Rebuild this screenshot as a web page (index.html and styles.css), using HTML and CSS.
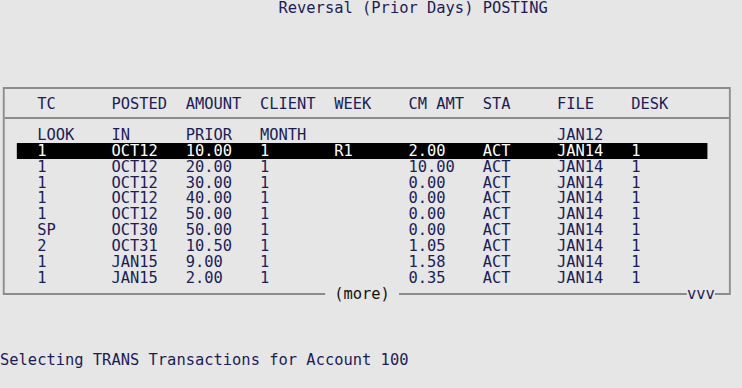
FILE: index.html
```html
<!DOCTYPE html>
<html>
<head>
    <link rel="stylesheet" href="styles.css">
</head>
<body>
    <div class="viewport">
        <div class="screen">
            <div class="title">Reversal (Prior Days) POSTING</div>

            <div class="box">
                <div class="row head">
                    <span>TC</span><span>POSTED</span><span>AMOUNT</span><span>CLIENT</span><span>WEEK</span><span>CM AMT</span><span>STA</span><span>FILE</span><span>DESK</span>
                </div>
                <div class="rows">
                    <div class="row">
                        <span>LOOK</span><span>IN</span><span>PRIOR</span><span>MONTH</span><span></span><span></span><span></span><span>JAN12</span><span></span>
                    </div>
                    <div class="row selected">
                        <span>1</span><span>OCT12</span><span>10.00</span><span>1</span><span>R1</span><span>2.00</span><span>ACT</span><span>JAN14</span><span>1</span>
                    </div>
                    <div class="row">
                        <span>1</span><span>OCT12</span><span>20.00</span><span>1</span><span></span><span>10.00</span><span>ACT</span><span>JAN14</span><span>1</span>
                    </div>
                    <div class="row">
                        <span>1</span><span>OCT12</span><span>30.00</span><span>1</span><span></span><span>0.00</span><span>ACT</span><span>JAN14</span><span>1</span>
                    </div>
                    <div class="row">
                        <span>1</span><span>OCT12</span><span>40.00</span><span>1</span><span></span><span>0.00</span><span>ACT</span><span>JAN14</span><span>1</span>
                    </div>
                    <div class="row">
                        <span>1</span><span>OCT12</span><span>50.00</span><span>1</span><span></span><span>0.00</span><span>ACT</span><span>JAN14</span><span>1</span>
                    </div>
                    <div class="row">
                        <span>SP</span><span>OCT30</span><span>50.00</span><span>1</span><span></span><span>0.00</span><span>ACT</span><span>JAN14</span><span>1</span>
                    </div>
                    <div class="row">
                        <span>2</span><span>OCT31</span><span>10.50</span><span>1</span><span></span><span>1.05</span><span>ACT</span><span>JAN14</span><span>1</span>
                    </div>
                    <div class="row">
                        <span>1</span><span>JAN15</span><span>9.00</span><span>1</span><span></span><span>1.58</span><span>ACT</span><span>JAN14</span><span>1</span>
                    </div>
                    <div class="row">
                        <span>1</span><span>JAN15</span><span>2.00</span><span>1</span><span></span><span>0.35</span><span>ACT</span><span>JAN14</span><span>1</span>
                    </div>
                </div>
                <span class="more"> (more) </span>
                <span class="scroll">vvv</span>
            </div>

            <div class="status">Selecting TRANS Transactions for Account 100</div>
        </div>
    </div>
</body>
</html>
```

FILE: styles.css
```css
/* terminal screen, 80 columns; the console font is drawn a bit narrow */
body {
    margin: 0;
    background: #e6e6e6;
    color: #1c1c58;
    font-family: 'DejaVu Sans Mono', monospace;
    font-size: 16.5px;
    line-height: 15.9px;
    overflow: hidden;
}

.viewport {
    width: 742px;
    height: 388px;
    overflow: hidden;
}

.screen {
    width: 794px;
    height: 388px;
    transform: scaleX(0.9345);
    transform-origin: 0 0;
}

.row span, .more, .title, .status {
    white-space: pre;
}

.title {
    padding-left: 30ch;
}

/* boxed list */
.box {
    position: relative;
    margin: 71px 0 0 3px;
    width: 775px;
    border: 2px solid #8c8c8c;
    padding: 7px 0 7px;
}

.row {
    display: grid;
    grid-template-columns: repeat(9, 8ch);
}

.head {
    padding: 0 0 5px calc(4ch - 5px);
    border-bottom: 2px solid #8c8c8c;
    margin-bottom: 8px;
}

.rows {
    padding-left: 13px;
    width: 739px;
}

.rows .row {
    padding-left: calc(4ch - 18px);
}

.selected {
    background: #000;
    color: #fff;
}

/* labels sitting on the bottom border */
.more, .scroll {
    position: absolute;
    bottom: -9px;
    background: #e6e6e6;
}

.more {
    left: calc(35ch - 5px);
    color: #111;
}

.scroll {
    left: calc(74ch - 5px);
}

.status {
    margin-top: 57px;
}
```
